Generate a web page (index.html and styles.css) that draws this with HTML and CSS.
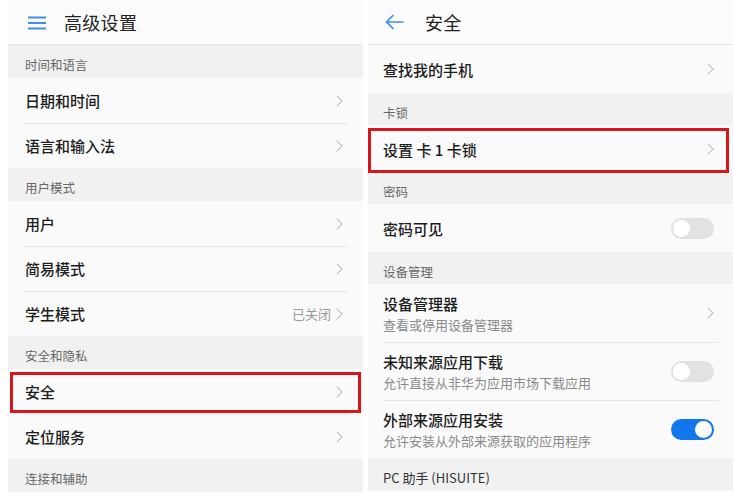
FILE: index.html
```html
<!DOCTYPE html>
<html lang="zh-CN">
<head>
  <meta charset="UTF-8">
  <title>高级设置 / 安全</title>
  <link rel="stylesheet" href="styles.css">
</head>
<body>
  <div class="screens">
    <!-- left: advanced settings -->
    <div class="panel panel-left">
      <div class="topbar">
        <svg class="icon-menu" width="18" height="14" viewBox="0 0 18 14">
          <path d="M0 1.5H18M0 7H18M0 12.5H18" stroke="#3d8fe8" stroke-width="1.8" fill="none"/>
        </svg>
        <span class="title">高级设置</span>
      </div>
      <div class="section">时间和语言</div>
      <div class="row"><span class="label">日期和时间</span><span class="chev"></span></div>
      <div class="row"><span class="label">语言和输入法</span><span class="chev"></span></div>
      <div class="section">用户模式</div>
      <div class="row"><span class="label">用户</span><span class="chev"></span></div>
      <div class="row"><span class="label">简易模式</span><span class="chev"></span></div>
      <div class="row"><span class="label">学生模式</span><span class="value">已关闭</span><span class="chev"></span></div>
      <div class="section">安全和隐私</div>
      <div class="row marked mark-left"><span class="label">安全</span><span class="chev"></span></div>
      <div class="row"><span class="label">定位服务</span><span class="chev"></span></div>
      <div class="section">连接和辅助</div>
    </div>

    <!-- right: security -->
    <div class="panel panel-right">
      <div class="topbar">
        <svg class="icon-back" width="19" height="16" viewBox="0 0 19 16">
          <path d="M18.5 8H1.5M8.5 1L1.5 8L8.5 15" stroke="#3d8fe8" stroke-width="1.7" fill="none"/>
        </svg>
        <span class="title">安全</span>
      </div>
      <div class="row tall"><span class="label">查找我的手机</span><span class="chev"></span></div>
      <div class="section">卡锁</div>
      <div class="row tall marked mark-right"><span class="label">设置 卡 1 卡锁</span><span class="chev"></span></div>
      <div class="section short">密码</div>
      <div class="row tall"><span class="label">密码可见</span><span class="switch"></span></div>
      <div class="section">设备管理</div>
      <div class="row double">
        <div class="text"><span class="label">设备管理器</span><span class="sub">查看或停用设备管理器</span></div>
        <span class="chev"></span>
      </div>
      <div class="row double">
        <div class="text"><span class="label">未知来源应用下载</span><span class="sub">允许直接从非华为应用市场下载应用</span></div>
        <span class="switch"></span>
      </div>
      <div class="row double">
        <div class="text"><span class="label">外部来源应用安装</span><span class="sub">允许安装从外部来源获取的应用程序</span></div>
        <span class="switch on"></span>
      </div>
      <div class="section dark">PC 助手 (HISUITE)</div>
    </div>
  </div>
</body>
</html>
```

FILE: styles.css
```css
body {
  margin: 0;
  background-color: #fff;
  font-family: "Noto Sans CJK SC", "Noto Sans", sans-serif;
  color: #1c1c1c;
}
.screens {
  display: flex;
  gap: 5px;
  padding-left: 8px;
}
.panel {
  display: flex;
  flex-direction: column;
  background-color: #fafafa;
}
.panel-left {
  width: 355px;
}
.panel-right {
  width: 365px;
}
.topbar {
  height: 44px;
  border-bottom: 1px solid #e6e6e6;
  display: flex;
  align-items: center;
  background-color: #fbfbfb;
}
.panel-left .topbar {
  padding-left: 20px;
}
.panel-right .topbar {
  padding-left: 17px;
}
.icon-menu {
  margin-top: 1px;
}
.panel-left .title {
  margin-left: 18px;
}
.panel-right .title {
  margin-left: 21px;
}
.title {
  font-size: 18px;
  color: #222;
  letter-spacing: 0.3px;
}
.section {
  height: 33px;
  box-sizing: border-box;
  padding: 6px 0 0 17px;
  display: flex;
  align-items: center;
  background-color: #f1f1f1;
  font-size: 12.5px;
  color: #666;
}
.panel-right .section {
  padding-left: 15px;
  height: 32px;
}
.section.short {
  height: 31px;
}
.section.dark {
  color: #333;
  font-size: 13px;
}
.row {
  position: relative;
  height: 45px;
  box-sizing: border-box;
  display: flex;
  align-items: center;
  padding: 0 19px 0 17px;
}
.panel-right .row {
  padding: 0 18px 0 15px;
}
.row.tall {
  height: 48px;
}
.row.double {
  height: 58px;
}
.row + .row::before {
  content: "";
  position: absolute;
  top: 0;
  left: 16px;
  right: 14px;
  border-top: 1px solid #e8e8e8;
}
.label {
  flex: 1;
  font-size: 15px;
  font-weight: 500;
  color: #1c1c1c;
}
.text {
  flex: 1;
  display: flex;
  flex-direction: column;
  gap: 1px;
}
.sub {
  font-size: 13px;
  color: #8a8a8a;
}
.value {
  font-size: 13px;
  color: #999;
  margin-right: 2px;
}
.chev {
  width: 7px;
  height: 7px;
  border-top: 1px solid #bdbdbd;
  border-right: 1px solid #bdbdbd;
  transform: rotate(45deg);
  margin-right: 3px;
}
.switch {
  position: relative;
  width: 43px;
  height: 21px;
  border-radius: 11px;
  background-color: #e2e2e2;
  margin-right: 1px;
}
.switch::after {
  content: "";
  position: absolute;
  top: 2px;
  left: 2px;
  width: 17px;
  height: 17px;
  border-radius: 50%;
  background-color: #fff;
}
.switch.on {
  background-color: #1277ee;
}
.switch.on::after {
  left: auto;
  right: 2px;
}
.marked::after {
  content: "";
  position: absolute;
  border: 3px solid #d8141c;
  z-index: 1;
}
.mark-left::after {
  top: 3px;
  bottom: 1px;
  left: 2px;
  right: 2px;
}
.mark-right::after {
  top: 3px;
  bottom: 0;
  left: 0;
  right: 4px;
}
```
